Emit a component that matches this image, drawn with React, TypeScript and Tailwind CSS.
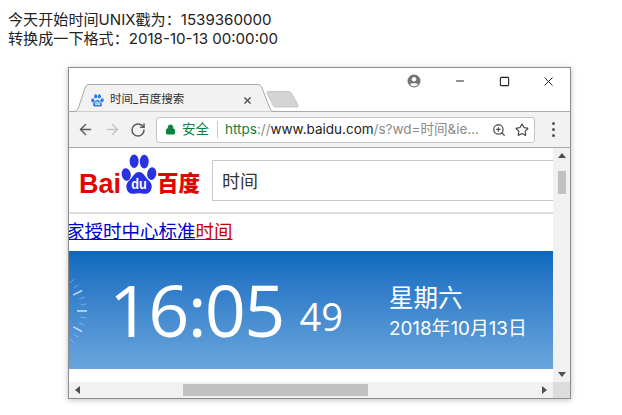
import { ArrowLeft, ArrowRight, RotateCw, Lock, ZoomIn, Star, Minus, Square, X } from 'lucide-react'

const cjk = "font-['Inter','Noto_Sans_CJK_SC',sans-serif]"

function Paw({ className, color = '#2932e1' }: { className?: string; color?: string }) {
  return (
    <svg viewBox="0 0 48 48" preserveAspectRatio="none" className={className}>
      <g fill={color}>
        <ellipse cx="7" cy="24" rx="6" ry="7.5" transform="rotate(-15 7 24)" />
        <ellipse cx="17.5" cy="8.5" rx="6" ry="8" />
        <ellipse cx="31" cy="9" rx="6" ry="8" />
        <ellipse cx="41" cy="23" rx="6" ry="7.5" transform="rotate(15 41 23)" />
        <path d="M24 21c-6 0-8 6-13 10-4 3-5 7-3 11 2 5 8 5 16 4 8 1 14 1 16-4 2-4 1-8-3-11-5-4-7-10-13-10z" />
      </g>
      <text x="24" y="41" textAnchor="middle" fontSize="17" fontWeight="700" fill="#fff" fontFamily="Liberation Sans, sans-serif">
        du
      </text>
    </svg>
  )
}

function ClockTicks() {
  const ticks = Array.from({ length: 15 }, (_, i) => (i - 7) * 9)
  return (
    <svg viewBox="0 0 22 70" className="absolute left-0 top-[25px] w-[22px] h-[70px]">
      {ticks.map((a) => {
        const major = Math.abs(a) === 27 || a === 0
        const rad = (a * Math.PI) / 180
        const inner = major ? 35 : 39
        const outer = 45
        return (
          <line
            key={a}
            x1={-27 + inner * Math.cos(rad)}
            y1={35 + inner * Math.sin(rad)}
            x2={-27 + outer * Math.cos(rad)}
            y2={35 + outer * Math.sin(rad)}
            stroke="#cfe6fa"
            strokeWidth={major ? 1.6 : 1}
            opacity={major ? 0.9 : 0.4}
          />
        )
      })}
    </svg>
  )
}

export default function App() {
  return (
    <div className={`w-[622px] h-[415px] bg-white overflow-hidden text-[#222] ${cjk}`}>
      <div className="pl-[8px] pt-[10px] text-[15.1px] leading-[19px]">
        <p>今天开始时间UNIX戳为：1539360000</p>
        <p>转换成一下格式：2018-10-13 00:00:00</p>
      </div>

      <div className="mt-[19px] ml-[68px] w-[503px] h-[332px] flex flex-col border border-[#8c8c8c] shadow-[0_1px_6px_rgba(0,0,0,0.25)] bg-white">
        {/* Tab strip */}
        <div className="relative h-[44px] shrink-0 border-b border-[#a9a9a9]">
          <svg viewBox="0 0 240 28" className="absolute left-[-1px] top-[16px] w-[240px] h-[28px]">
            <path d="M0 27.5H6C9 27.5 10 25 11 22L17 4C18 1 19 .5 22 .5H189C192 .5 193 1 194 4L201 22C202 25 203 27.5 206 27.5" fill="#f2f2f2" stroke="#a9a9a9" />
          </svg>
          <svg viewBox="0 0 34 17" className="absolute left-[197px] top-[23px] w-[34px] h-[17px]">
            <path d="M1 2C.5 1 1 .5 2 .5H22C24 .5 25 1 26 3L32 14C32.500 15.500 32 16 30 16H10C8 16 7.500 15.500 7 14Z" fill="#d4d4d4" stroke="#c6c6c6" />
          </svg>
          <div className="absolute left-[22px] top-[24px] flex items-center h-[16px]">
            <Paw className="w-[13px] h-[13px]" color="#2f7de1" />
            <span className="ml-[6px] text-[11.5px] text-[#333] leading-none">时间_百度搜索</span>
          </div>
          <X className="absolute left-[173px] top-[27px] w-[11px] h-[11px] text-[#444]" strokeWidth={2.5} />

          <div className="absolute right-0 top-0 h-[26px] flex items-center">
            <svg viewBox="0 0 14 14" className="w-[14px] h-[14px] mr-[17px]">
              <circle cx="7" cy="7" r="6.5" fill="#757575" />
              <circle cx="7" cy="5.200" r="2.200" fill="#fff" />
              <path d="M3 10.500c1-1.800 7-1.800 8 0-1 1.400-2.500 1.800-4 1.800s-3-.4-4-1.800z" fill="#fff" />
            </svg>
            <div className="w-[44px] flex justify-center"><Minus className="w-[12px] h-[12px] text-[#222]" strokeWidth={2.4} /></div>
            <div className="w-[44px] flex justify-center"><Square className="w-[11px] h-[11px] text-[#222]" strokeWidth={2.4} /></div>
            <div className="w-[44px] flex justify-center"><X className="w-[15px] h-[15px] text-[#222]" strokeWidth={1.6} /></div>
          </div>
        </div>

        {/* Toolbar */}
        <div className="h-[36px] shrink-0 flex items-center bg-[#f2f2f2] border-b border-[#a9a9a9] pl-[8px] pr-[15px]">
          <ArrowLeft className="w-[17px] h-[17px] text-[#5a5a5a]" strokeWidth={2} />
          <ArrowRight className="ml-[10px] w-[17px] h-[17px] text-[#c4c4c4]" strokeWidth={2} />
          <RotateCw className="ml-[9px] w-[16px] h-[16px] text-[#5a5a5a]" strokeWidth={2.2} />
          <div className="ml-[10px] w-[379px] h-[26px] flex items-center bg-white border border-[#c4c4c4] rounded-[3px] pl-[8px] text-[13.500px] whitespace-nowrap">
            <Lock className="w-[11px] h-[11px] text-[#0b8043]" fill="#0b8043" strokeWidth={2} />
            <span className="ml-[6px] text-[13.500px] text-[#0b8043]">安全</span>
            <span className="ml-[8px] w-px h-[17px] bg-[#c8c8c8]" />
            <span className="ml-[7px] text-[#0b8043]">https</span>
            <span className="text-[#8a8a8a]">://</span>
            <span className="text-[#222]">www.baidu.com</span>
            <span className="text-[#8a8a8a]">/s?wd=时间&amp;ie...</span>
            <ZoomIn className="ml-auto w-[14px] h-[14px] text-[#555]" strokeWidth={2.2} />
            <Star className="ml-[9px] mr-[5px] w-[14px] h-[14px] text-[#444]" strokeWidth={2} />
          </div>
          <div className="ml-auto flex flex-col gap-[3px]">
            <span className="w-[3px] h-[3px] bg-[#555] rounded-full" />
            <span className="w-[3px] h-[3px] bg-[#555] rounded-full" />
            <span className="w-[3px] h-[3px] bg-[#555] rounded-full" />
          </div>
        </div>

        {/* Viewport */}
        <div className="flex-1 flex min-h-0">
          <div className="flex-1 min-w-0 overflow-hidden flex flex-col">
            <div className="h-[66px] shrink-0 flex items-center border-b-2 border-[#dcdcdc]">
              <div className="w-[143px] shrink-0 -mt-[9px] flex items-end justify-end pr-[12px] text-[#e10601] font-bold font-['Liberation_Sans','Noto_Sans_CJK_SC',sans-serif]">
                <span className="text-[27px] leading-[28px]">Bai</span>
                <Paw className="w-[36px] h-[41px] mb-[3px]" />
                <span className="text-[21.5px] leading-[28px] font-black">百度</span>
              </div>
              <div className="flex-1 h-[41px] flex items-center border-y border-l border-[#c8c8c8] pl-[9px] pt-[2px] text-[18px] text-[#333]">
                时间
              </div>
            </div>
            <div className="h-[37px] shrink-0 pt-[6px] -ml-[3px] text-[18.5px] leading-[22px] whitespace-nowrap">
              <span className="text-[#0000cc] underline">家授时中心标准</span>
              <span className="text-[#c00] underline">时间</span>
            </div>
            <div className="relative h-[118px] shrink-0 bg-gradient-to-b from-[#0a69bf] to-[#69a6dd] text-white flex items-center">
              <ClockTicks />
              <span className="ml-[40px] text-[72px] leading-none -mt-[3px] font-['Open_Sans',sans-serif] tracking-[-1.800px]">16:05</span>
              <span className="ml-[16px] mt-[11px] text-[38px] leading-none font-['Open_Sans',sans-serif]">49</span>
              <div className="ml-[46px] mt-[2px] flex flex-col">
                <span className="text-[24.5px] leading-[30px]">星期六</span>
                <span className="mt-[5px] text-[18.8px] leading-[22px] whitespace-nowrap">2018年10月13日</span>
              </div>
            </div>
          </div>
          <div className="w-[17px] shrink-0 bg-[#f1f1f1] flex flex-col items-center justify-between">
            <div className="flex flex-col items-center">
              <span className="mt-[5px] border-x-[4px] border-x-transparent border-b-[5px] border-b-[#505050]" />
              <span className="mt-[13px] w-full h-[23px] bg-[#c1c1c1]" />
            </div>
            <span className="mb-[5px] border-x-[4px] border-x-transparent border-t-[5px] border-t-[#505050]" />
          </div>
        </div>

        {/* Horizontal scrollbar */}
        <div className="h-[16px] shrink-0 flex bg-[#f1f1f1] items-center">
          <span className="ml-[6px] border-y-[4px] border-y-transparent border-r-[5px] border-r-[#505050]" />
          <span className="ml-[103px] w-[185px] h-[12px] bg-[#c1c1c1]" />
          <span className="ml-[174px] border-y-[4px] border-y-transparent border-l-[5px] border-l-[#505050]" />
          <span className="ml-auto w-[17px] h-full bg-[#dcdcdc]" />
        </div>
      </div>
    </div>
  )
}
